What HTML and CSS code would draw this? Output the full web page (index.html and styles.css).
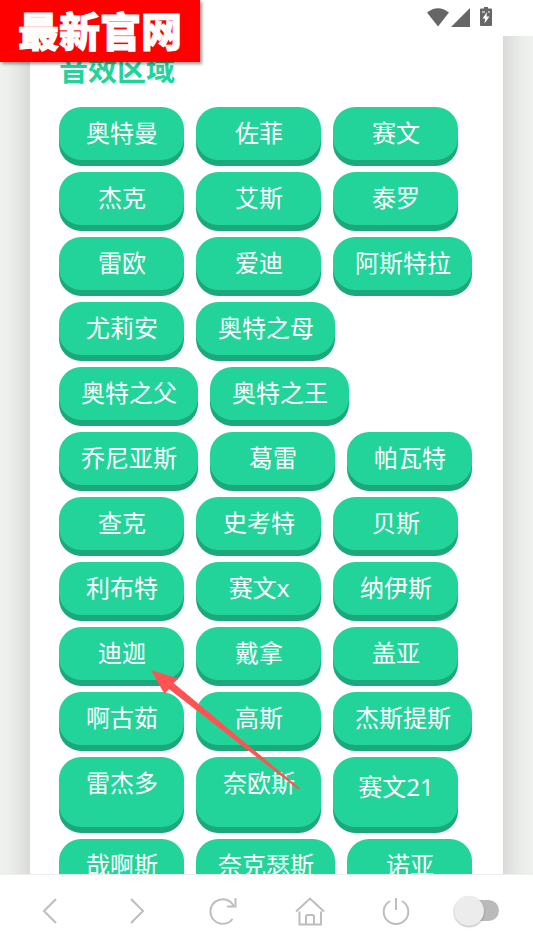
FILE: index.html
```html
<!DOCTYPE html>
<html lang="zh-CN">
<head>
<meta charset="utf-8">
<meta name="viewport" content="width=device-width, initial-scale=1">
<title>音效区域</title>
<link rel="stylesheet" href="styles.css">
</head>
<body>
<header class="status">
  <svg width="66" height="20" viewBox="0 0 66 20" fill="#666" aria-hidden="true">
    <path d="M0 4.500Q11-4 22 4.500L11 18.500Z"/>
    <path d="M24 19L43 0V19Z"/>
    <path d="M57-1h4v1.500h3q1 0 1 1V17q0 1-1 1H54q-1 0-1-1V1.500q0-1 1-1h3z"/>
    <path fill="#fff" d="M60 4L55.500 10.500H58L57.500 15.500L62.500 8.500H59.500Z"/>
    <path stroke="#fff" stroke-width="1" d="M55 4h3M61 4h2"/>
  </svg>
</header>
<main class="page">
  <section class="card">
    <h2 class="title">音效区域</h2>
    <div class="sounds">
      <button>奥特曼</button><button>佐菲</button><button>赛文</button>
      <button>杰克</button><button>艾斯</button><button>泰罗</button>
      <button>雷欧</button><button>爱迪</button><button>阿斯特拉</button>
      <button>尤莉安</button><button>奥特之母</button>
      <button>奥特之父</button><button>奥特之王</button>
      <button>乔尼亚斯</button><button>葛雷</button><button>帕瓦特</button>
      <button>查克</button><button>史考特</button><button>贝斯</button>
      <button>利布特</button><button>赛文x</button><button>纳伊斯</button>
      <button>迪迦</button><button>戴拿</button><button>盖亚</button>
      <button>啊古茹</button><button>高斯</button><button>杰斯提斯</button>
      <button>雷杰多</button><button>奈欧斯</button><button class="tall">赛文21</button>
      <button>哉啊斯</button><button>奈克瑟斯</button><button>诺亚</button>
    </div>
  </section>
</main>
<nav class="toolbar" aria-label="浏览器">
  <button aria-label="后退"><svg viewBox="0 0 30 30"><path d="M21 3L9 15L21 27"/></svg></button>
  <button aria-label="前进"><svg viewBox="0 0 30 30"><path d="M9 3L21 15L9 27"/></svg></button>
  <button aria-label="刷新"><svg viewBox="0 0 30 30"><path d="M24.500 23A12.300 12.300 0 1 1 25.500 9.500M27.500 2V10.500H19"/></svg></button>
  <button aria-label="主页"><svg viewBox="0 0 30 30"><path d="M1 15.500L15 2.500L29 15.500M4.500 15.500V28.500H26V15.500M11 28V20.500Q11 19 12.500 19H17.500Q19 19 19 20.500V28"/></svg></button>
  <button aria-label="关闭"><svg viewBox="0 0 30 30"><path d="M15 2V14M9 5A12.300 12.300 0 1 0 21 5"/></svg></button>
  <label class="toggle"><input type="checkbox" role="switch" aria-label="开关"></label>
</nav>
<div class="banner">最新官网</div>
<svg class="arrow" viewBox="0 0 150 121" aria-hidden="true"><path fill="#ff5252" d="M0 0L27 8.500L22.500 13L148.500 118L147.500 119.500L18 19L13.500 24Z"/></svg>
</body>
</html>
```
FILE: styles.css
```css
* { box-sizing: border-box; }
body {
  margin: 0;
  height: 100vh;
  display: flex;
  flex-direction: column;
  position: relative;
  overflow: hidden;
  background: #fff;
  font-family: "Noto Sans", "Noto Sans CJK SC", sans-serif;
}
button { border: 0; padding: 0; font: inherit; cursor: pointer; }
.status {
  flex: 0 0 36px;
  display: flex;
  justify-content: flex-end;
  padding: 8px 40px 0 0;
}
.status svg { overflow: visible; }
.page {
  flex: 1;
  min-height: 0;
  overflow: hidden;
  padding: 0 30px;
  background: #f0f2ef;
}
.card {
  margin-top: -60px;
  padding: 72px 29px 12px;
  background: #fff;
  box-shadow: 0 0 30px rgba(0, 0, 0, 0.2);
}
.title {
  margin: 0 0 15px;
  font-size: 29px;
  line-height: 44px;
  font-weight: 700;
  color: #23d49a;
}
.sounds {
  display: flex;
  flex-wrap: wrap;
  gap: 12px;
}
.sounds button {
  display: flex;
  align-items: flex-start;
  justify-content: center;
  min-width: 125px;
  min-height: 53px;
  padding: 0 21px 0 22px;
  border-radius: 22px;
  background: #23d49a;
  box-shadow: 0 6px #1da87c;
  color: #fff;
  font-size: 24px;
  line-height: 52px;
}
.sounds .tall { min-height: 70px; padding-top: 4px; }
.toolbar {
  flex: 0 0 74px;
  display: grid;
  grid-template-columns: repeat(6, 1fr);
  align-items: center;
  padding: 0 7px 2px;
  border-top: 1px solid #eee;
  background: #fff;
}
.toolbar button {
  display: grid;
  place-items: center;
  height: 60px;
  background: none;
}
.toolbar svg {
  width: 30px;
  height: 30px;
  fill: none;
  stroke: #bdbdbd;
  stroke-width: 2;
}
.toggle { display: flex; justify-content: center; padding-right: 13px; }
.toggle input {
  appearance: none;
  display: flex;
  align-items: center;
  width: 45px;
  height: 21px;
  margin: 0;
  border-radius: 11px;
  background: #bababa;
}
.toggle input::before {
  content: "";
  width: 30px;
  height: 30px;
  border-radius: 50%;
  background: #ececec;
  box-shadow: 0 1px 2px rgba(0, 0, 0, 0.3);
}
.banner {
  position: absolute;
  top: 0;
  left: 0;
  width: 200px;
  height: 62px;
  background: #f00;
  box-shadow: 2px 2px 3px rgba(0, 0, 0, 0.4);
  color: #fff;
  font-family: "Noto Sans CJK SC", sans-serif;
  font-size: 41px;
  line-height: 58px;
  font-weight: 900;
  text-align: center;
  -webkit-text-stroke: 1px #fff;
}
.arrow {
  position: absolute;
  left: 151px;
  top: 670px;
  width: 150px;
  height: 121px;
  pointer-events: none;
}
```
